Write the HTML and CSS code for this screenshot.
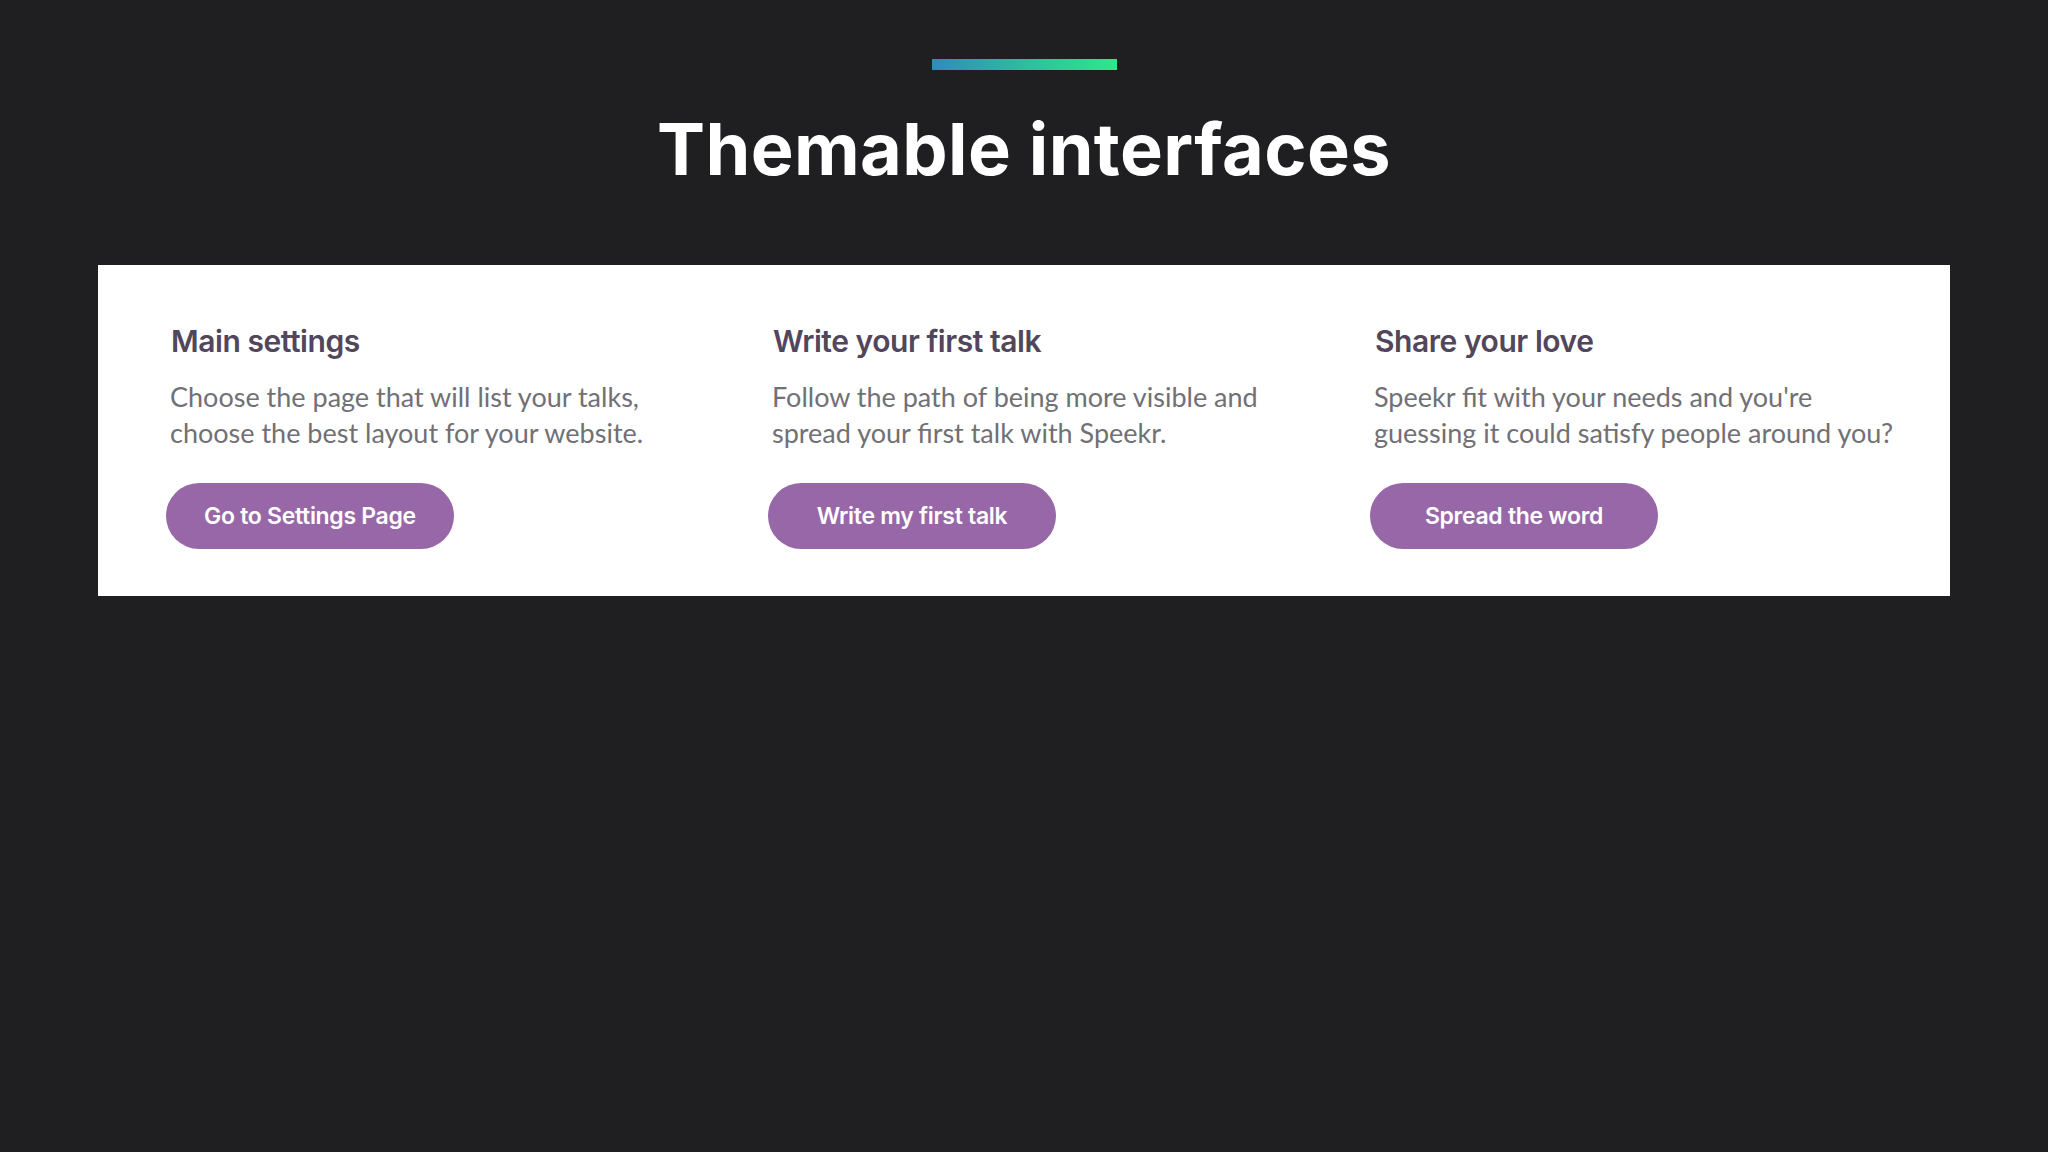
FILE: index.html
```html
<!DOCTYPE html>
<html lang="en">
<head>
<meta charset="utf-8">
<title>Themable interfaces</title>
<link rel="stylesheet" href="styles.css">
</head>
<body>
<header class="hero">
  <div class="accent-bar"></div>
  <h1 class="title">Themable interfaces</h1>
</header>
<section class="panel">
  <div class="col">
    <h2 class="col-title">Main settings</h2>
    <p class="col-text">Choose the page that will list your talks,<br>choose the best layout for your website.</p>
    <a class="btn" href="#">Go to Settings Page</a>
  </div>
  <div class="col">
    <h2 class="col-title">Write your first talk</h2>
    <p class="col-text">Follow the path of being more visible and<br>spread your first talk with Speekr.</p>
    <a class="btn" href="#">Write my first talk</a>
  </div>
  <div class="col">
    <h2 class="col-title">Share your love</h2>
    <p class="col-text">Speekr fit with your needs and you're<br>guessing it could satisfy people around you?</p>
    <a class="btn" href="#">Spread the word</a>
  </div>
</section>
</body>
</html>
```
FILE: styles.css
```css
html, body {
  margin: 0;
  padding: 0;
}
body {
  background: #1f1f21;
  width: 2048px;
  height: 1152px;
  overflow: hidden;
}
.hero {
  padding-top: 59px;
  display: flex;
  flex-direction: column;
  align-items: center;
}
.accent-bar {
  width: 185px;
  height: 11px;
  background: linear-gradient(90deg, #2f8cb8 0%, #2cc79a 60%, #2ee78c 100%);
}
.title {
  margin: 35px 0 0 0;
  font-family: Inter, "Liberation Sans", sans-serif;
  font-weight: 700;
  font-size: 72px;
  line-height: 88px;
  color: #ffffff;
  letter-spacing: 0.4px;
}
.panel {
  margin: 72px 0 0 98px;
  width: 1852px;
  box-sizing: border-box;
  background: #ffffff;
  padding: 58px 0 47px 68px;
  display: grid;
  grid-template-columns: repeat(3, 556px);
  column-gap: 46px;
}
.col {
  display: flex;
  flex-direction: column;
  align-items: flex-start;
}
.col-title {
  margin: 0 0 0 5px;
  font-family: Inter, "Liberation Sans", sans-serif;
  font-weight: 600;
  font-size: 30px;
  line-height: 36px;
  color: #51465a;
  letter-spacing: -0.45px;
}
.col-text {
  margin: 20px 0 0 4px;
  font-family: Lato, "Liberation Sans", sans-serif;
  font-weight: 400;
  font-size: 27px;
  line-height: 35.6px;
  color: #717075;
  letter-spacing: 0;
  white-space: nowrap;
}
.btn {
  margin-top: 33px;
  width: 288px;
  height: 66px;
  border-radius: 33px;
  background: #9867a8;
  color: #ffffff;
  text-decoration: none;
  display: flex;
  align-items: center;
  justify-content: center;
  font-family: Inter, "Liberation Sans", sans-serif;
  font-weight: 600;
  font-size: 23px;
  letter-spacing: -0.3px;
}
```
